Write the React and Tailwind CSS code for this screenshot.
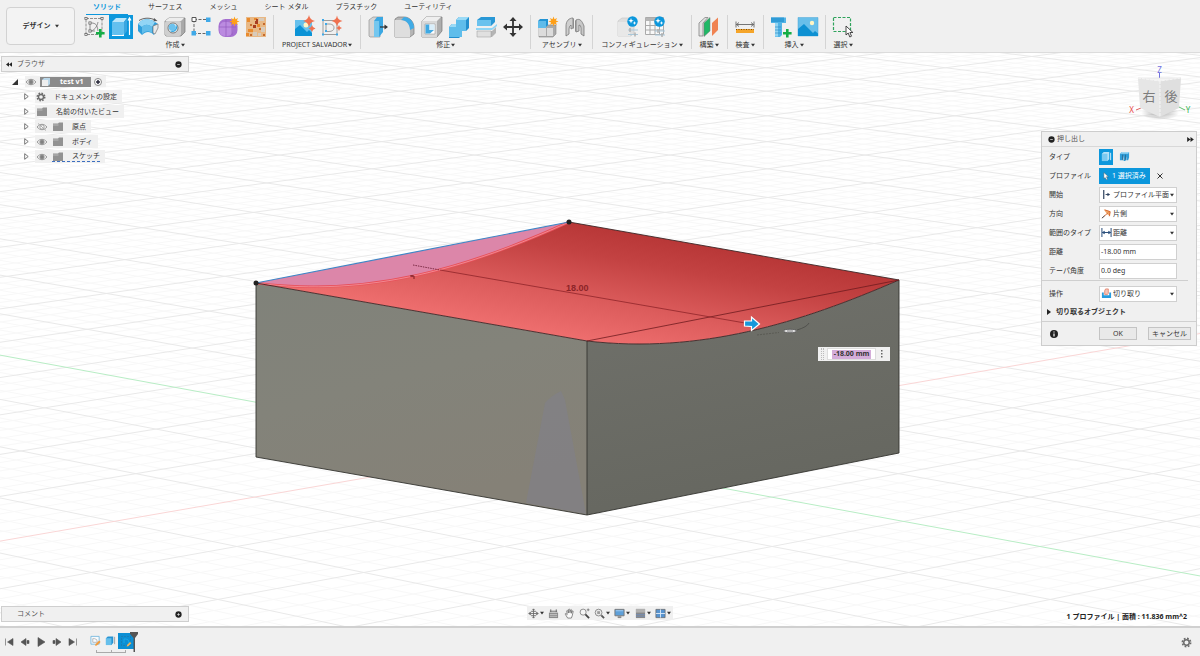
import React, { useState } from "react";
import clsx from "clsx";

const BLUE = "#0c97dc";

const Caret = ({ className }) => (
  <svg viewBox="0 0 5 4" className={clsx("w-1 h-1 shrink-0 fill-[#333]", className)}>
    <path d="M0 0.3h5L2.5 4z" />
  </svg>
);

/* ---------- ribbon icons, 24x24 each ---------- */

const Plus = () => <path d="M14 17h3v-3h2.6v3h3v2.6h-3v3H17v-3h-3z" fill="#16ad46" />;

const Sparkle = ({ x, y, r }) => (
  <path
    d={`M${x} ${y - r}Q${x + r * 0.15} ${y - r * 0.15} ${x + r} ${y}Q${x + r * 0.15} ${y + r * 0.15} ${x} ${y + r}Q${x - r * 0.15} ${y + r * 0.15} ${x - r} ${y}Q${x - r * 0.15} ${y - r * 0.15} ${x} ${y - r}z`}
    fill="#f0714f"
  />
);

const Star = ({ x, y }) => (
  <g transform={`translate(${x} ${y})`}>
    <path d="M0-5l1 2.8L3.6-3.6 2.3-1 5 0 2.3 1l1.3 2.6L1 2.3 0 5l-1-2.7-2.6 1.3L-2.3 1-5 0l2.7-1-1.3-2.6L-1-2.2z" fill="#ff9f16" />
  </g>
);

const Nodes = ({ points, color = "#555" }) =>
  points.map(([x, y]) => (
    <rect key={`${x}-${y}`} x={x - 1.1} y={y - 1.1} width="2.2" height="2.2" fill="#fff" stroke={color} strokeWidth="0.7" />
  ));

const ribbonIcons = {
  sketch: (
    <>
      <path d="M4 3.5h16v16H4z" fill="none" stroke="#777" strokeWidth="0.8" strokeDasharray="3 1" />
      <path d="M8 16c4 0 7-4 8-9M8 16V8h1.500c4 0 6 2 6.500 8M8 16h5" fill="none" stroke="#777" strokeWidth="0.8" />
      <Nodes points={[[4, 3.5], [20, 3.5], [4, 19.5], [8, 16], [8, 8]]} />
      <Plus />
    </>
  ),
  extrude: (
    <>
      <path d="M3 7l4-4h11l-3 4v14H5l-2-2z" fill="#bce6fa" />
      <path d="M3 7h12v11a2 2 0 0 1-2 2H5a2 2 0 0 1-2-2z" fill="#63c0ef" />
      <path d="M15 7l3-4v13l-3 4z" fill="#3aa6e0" />
      <path d="M3 20.500h12" stroke="#fff" />
      <path d="M20.500 20V3.500M19 5.500l1.500-2.500L22 5.500" fill="none" stroke="#fff" strokeWidth="1.200" />
    </>
  ),
  revolve: (
    <>
      <path d="M2 9l3-3c4-2.500 9-2.500 14 1l3 2-4 11c-4-4-8-4-12 0l-4-4z" fill="#2f9fdc" />
      <path d="M2 9l3-3c4-2.500 9-2.500 14 1l-3 5c-4-3-7-3-10 0z" fill="#92d5f5" />
      <path d="M6 12c3-3 6-3 10 0v6c-4-3-7-2-10 1z" fill="#62bdea" />
      <path d="M17 11l5-2v4l-3 6-2-1z" fill="#e9e9e9" stroke="#777" strokeWidth="0.700" />
      <path d="M3 5.500C8 2.500 14 2.500 19 5" fill="none" stroke="#555" strokeWidth="0.900" />
      <path d="M18 3l3.500 3-4 .3z" fill="#555" />
    </>
  ),
  hole: (
    <>
      <path d="M2 6l4-3h16v14l-4 4H3l-1-1z" fill="#a9a9a9" stroke="#777" strokeWidth="0.7" />
      <path d="M2 6l4-3h15l-3 3z" fill="#ededed" />
      <rect x="2" y="6" width="16" height="15" rx="2" fill="#cfcfcf" />
      <circle cx="10" cy="13" r="5" fill="#fff" stroke="#777" />
      <path d="M13.500 9.500a5 5 0 0 1-6.500 7c4 0 6.500-3 6.500-7z" fill="#2fa4e0" />
      <circle cx="9.300" cy="12.300" r="3.600" fill="#6cc2ee" />
    </>
  ),
  pattern: (
    <>
      <path d="M4 4.500h15M4 4.500v14h15" fill="none" stroke="#666" strokeWidth="1" strokeDasharray="3 1.500" />
      <path d="M2 2.500h4v4H2z" fill="#fff" stroke="#555" />
      <path d="M16 2.500h4.500V7H16zM16 16h4.500v4.500H16zM1.500 16H6v4.500H1.500z" fill="#3fa9e8" />
    </>
  ),
  form: (
    <>
      <rect x="1.500" y="4" width="19" height="18" rx="7" fill="#a56fd0" />
      <rect x="2.500" y="7" width="13" height="14" rx="5" fill="#bb8be0" />
      <path d="M2 12h17M9 5v16M15 6v14" stroke="#8d55bb" strokeWidth="0.6" fill="none" />
      <Star x={17.5} y={6.5} />
    </>
  ),
  texture: (
    <>
      <path d="M2 2h20v20H2z" fill="#e8b885" />
      <path d="M3 3h3v4H3zM10 3h3v2h-3zM4 14h5v3H4zM2 18h3v3H2zM13 9h3v3h-3z" fill="#e98b2e" />
      <path d="M15 3h5v3h-5zM17 12h4v5h-4zM9 17h4v4H9zM14 18h3v3h-3z" fill="#d8cbbb" />
      <path d="M11 6h3v3h-3zM9 10h3v3H9zM12 4h2v2h-2z" fill="#a83c20" />
      <path d="M6 9h2v2H6zM15 13h2v2h-2zM19 8h2v2h-2zM6 19h2v2H6zM19 19h2v2h-2z" fill="#c66a2c" />
    </>
  ),
  salvadorImage: (
    <>
      <path d="M3 5h17v16H3z" fill="#66c0ec" />
      <path d="M3 14l5-4 7 7 2-2 3 3v3H3z" fill="#0b93d6" />
      <circle cx="14" cy="10" r="2.500" fill="#fff5c4" />
      <Sparkle x={17} y={6} r={6} />
      <Sparkle x={20} y={13.500} r={3.500} />
    </>
  ),
  salvadorSketch: (
    <>
      <path d="M4 5.500h14v14H4z" fill="none" stroke="#888" strokeWidth="0.8" />
      <path d="M7 16.500V9h3c4 0 5 2 5 4s-2 3.500-5 3.500z" fill="none" stroke="#888" strokeWidth="0.8" />
      <path d="M3 4h2v2H3zM3 18.500h2v2H3zM17 18.500h2v2h-2zM6 8h2v2H6zM6 15h2v2H6z" fill="#3fa9e8" />
      <Sparkle x={18} y={6} r={5.500} />
      <Sparkle x={20} y={13} r={3} />
    </>
  ),
  pressPull: (
    <>
      <path d="M3 5l4-3h10l-3 3v17H4l-1-1z" fill="#d5d5d5" stroke="#888" strokeWidth="0.600" />
      <path d="M8 6l3-4h6v15l-4 5H8z" fill="#3ba8e3" />
      <path d="M8 6h5v16H8z" fill="#74c7ef" />
      <path d="M14 12h6" stroke="#333" strokeWidth="1.200" />
      <path d="M18.500 9.500L22 12l-3.500 2.500z" fill="#333" />
    </>
  ),
  fillet: (
    <>
      <path d="M2 4l3-2h6c6 0 10 5 10 11v6l-4 3H2z" fill="#b5b5b5" stroke="#777" strokeWidth="0.700" />
      <path d="M2 5h6c5 0 9 4 9 9v8H2z" fill="#dedede" />
      <path d="M8 5l3-3c6 0 10 5 10 11l-4 2c0-6-4-10-9-10z" fill="#3fabe6" />
    </>
  ),
  shell: (
    <>
      <path d="M2 6l4-4h16v14l-5 6H2z" fill="#adadad" stroke="#777" strokeWidth="0.700" />
      <path d="M2 6l4-4h15l-4 4z" fill="#efefef" />
      <path d="M2 6h15v16H2z" fill="#d9d9d9" />
      <path d="M5 9h10v10H5z" fill="#fff" stroke="#888" strokeWidth="0.500" />
      <path d="M5.500 9.500h4V15H14l-4 3.500H5.500z" fill="#3fa9e3" />
      <path d="M9.500 9.500h5V15h-5z" fill="#d9eefa" />
    </>
  ),
  combine: (
    <>
      <path d="M9 5l3-3h10v11l-3 3h-4v4l-3 3H2V12l3-3h4z" fill="#238fce" />
      <path d="M9 5h10v11h-4v6H2V12h7z" fill="#5fbdeb" />
      <path d="M9 5l3-3h10l-3 3zM2 12l3-3h4v3z" fill="#9adaf6" />
    </>
  ),
  split: (
    <>
      <path d="M3 5l4-3h14v5l-4 4H3z" fill="#2998d6" />
      <path d="M3 5h14v6H3z" fill="#6ac2ee" />
      <path d="M2 13h16l5-4v2l-5 4H2z" fill="#8fd5f5" />
      <path d="M3 16h15l4-4v6l-4 4H3z" fill="#b5b5b5" />
      <path d="M3 16h14v6H3z" fill="#e0e0e0" stroke="#999" strokeWidth="0.500" />
    </>
  ),
  move: (
    <path
      d="M12 2l3.500 4h-2.600v5.100H18V8.500l4 3.500-4 3.500v-2.600h-5.100V18h2.600L12 22l-3.500-4h2.600v-5.100H6v2.600L2 12l4-3.500v2.600h5.100V6H8.500z"
      fill="#333"
    />
  ),
  component: (
    <>
      <path d="M3 12l3-2h14v9l-3 3H3z" fill="#aaa" stroke="#888" strokeWidth="0.600" />
      <path d="M3 13h7v8H3zM11 13h6v8h-6z" fill="#dcdcdc" />
      <path d="M2 6l2-2h8v6l-2 2H2z" fill="#2294d4" />
      <path d="M2 6h8v7H2z" fill="#5fbbea" />
      <Star x={17.5} y={6.5} />
    </>
  ),
  joint: (
    <>
      <path d="M3 11c0-5 3-8 7-8v10l-2 1v-4q-2 1-2 4v5l-3 2z" fill="#cfcfcf" stroke="#777" strokeWidth="0.800" />
      <path d="M13 5c4-2 6 1 8 6v10l-3-2v-6q0-3-2-3v6l-3 1z" fill="#c8c8c8" stroke="#777" strokeWidth="0.800" />
      <path d="M10 3l1 1v9l-1 1zM13 5l-1 1v10l1 1z" fill="#8d8d8d" />
    </>
  ),
  configure: (
    <>
      <path d="M2 6l4-3h12v15l-3 3H2z" fill="#dedede" stroke="#c8c8c8" strokeWidth="0.700" />
      <path d="M2 7h12v14H2z" fill="#e8e8e8" />
      <path d="M12 15h10M12 19.500h10" stroke="#a8c8db" strokeWidth="1.200" />
      <path d="M14 13v4M19 17.500v4" stroke="#b0b0b0" strokeWidth="1.500" />
      <circle cx="16.500" cy="6.500" r="5.200" fill={BLUE} />
      <path d="M15 3l.7 2 2 .7-2 .7-.7 2-.7-2-2-.7 2-.7zM18.500 6l.5 1.500 1.500.5-1.500.5-.5 1.500-.5-1.500-1.500-.5 1.500-.5z" fill="#fff" />
    </>
  ),
  configTable: (
    <>
      <path d="M2.500 2.500h18v17h-18z" fill="#f8f8f8" stroke="#aaa" />
      <path d="M2.500 3h18v3h-18z" fill="#b5b5b5" />
      <path d="M2.500 10.500h18M2.500 15h18M7 6v13.500M12 6v13.500M16.500 6v13.500" stroke="#aaa" fill="none" />
      <path d="M12 16h10M12 20h10" stroke="#a8c8db" strokeWidth="1.200" />
      <path d="M15 14v4M19 18v4" stroke="#b0b0b0" strokeWidth="1.500" />
      <circle cx="16.500" cy="6.500" r="5.200" fill={BLUE} />
      <path d="M15 3l.7 2 2 .7-2 .7-.7 2-.7-2-2-.7 2-.7zM18.500 6l.5 1.500 1.500.5-1.500.5-.5 1.500-.5-1.500-1.500-.5 1.500-.5z" fill="#fff" />
    </>
  ),
  plane: (
    <>
      <path d="M2 8l6-5.500h3L6 8v13H2z" fill="#e2e2e2" stroke="#777" strokeWidth="0.700" />
      <path d="M7 8l6-5.500V16l-6 5.500z" fill="#1fb866" stroke="#777" strokeWidth="0.500" />
      <path d="M15 8l6-5.500V15l-6 6z" fill="#f08352" />
    </>
  ),
  measure: (
    <>
      <path d="M3 6.500v6M21 6.500v6M3 9.500h18M6 7.500l-2.500 2 2.500 2M18 7.500l2.500 2-2.500 2" fill="none" stroke="#666" strokeWidth="0.900" />
      <path d="M3 14h18v4H3z" fill="#f5a52a" />
      <path d="M3 14.500h18" stroke="#7a4d10" strokeDasharray="1 1.500" />
    </>
  ),
  insertPart: (
    <>
      <path d="M2 2.500h15V8h-4v12l-2 2H6V8H2z" fill="#52b4e6" />
      <path d="M2 2.500h13V7H2z" fill="#2f9bd6" />
      <path d="M6 8h3v13.500H6z" fill="#92d5f3" />
      <path d="M6 12h6M6 15h6M6 18h6" stroke="#2f8dc5" strokeWidth="0.700" />
      <Plus />
    </>
  ),
  insertImage: (
    <>
      <path d="M2 2.500h20v18.500H2z" fill="#68bfea" stroke="#4aa6d6" strokeWidth="0.500" />
      <path d="M2 14l6-5 9 9 2-2 3 2.500v2.500H2z" fill="#0d90d2" />
      <circle cx="16" cy="8" r="2.200" fill="#fff5c4" />
    </>
  ),
  select: (
    <>
      <path d="M2.500 2.500h17v14h-17z" fill="none" stroke="#2fa35c" strokeWidth="1.200" strokeDasharray="3 1.500" />
      <path d="M15 11v9l2.200-2 1.600 4 1.700-.8-1.600-3.700h3z" fill="#fff" stroke="#333" strokeWidth="0.900" />
    </>
  ),
};

const tabs = ["ソリッド", "サーフェス", "メッシュ", "シート メタル", "プラスチック", "ユーティリティ"];

const groups = [
  { label: "作成", tools: ["sketch", "extrude", "revolve", "hole", "pattern", "form", "texture"] },
  { label: "PROJECT SALVADOR", tools: ["salvadorImage", "salvadorSketch"] },
  { label: "修正", tools: ["pressPull", "fillet", "shell", "combine", "split", "move"] },
  { label: "アセンブリ", tools: ["component", "joint"] },
  { label: "コンフィギュレーション", tools: ["configure", "configTable"] },
  { label: "構築", tools: ["plane"] },
  { label: "検査", tools: ["measure"] },
  { label: "挿入", tools: ["insertPart", "insertImage"] },
  { label: "選択", tools: ["select"] },
];

const Toolbar = () => {
  const [tab, setTab] = useState("ソリッド");

  return (
    <header className="relative z-10 flex h-[53px] bg-[#f0f0f0] border-b border-[#dcdcdc]">
      <button className="ml-[6px] mt-[7px] w-[69px] h-[38px] shrink-0 flex items-center justify-center gap-1 rounded-sm border border-[#d2d2d2] bg-[#f3f3f3] font-bold">
        デザイン
        <Caret />
      </button>
      <div className="ml-[2px]">
        <nav className="flex gap-[13px] pl-[9px]">
          {tabs.map((name) => (
            <button
              key={name}
              onClick={() => setTab(name)}
              className={clsx(
                "h-[15px] px-[7px] border-b leading-[14px] whitespace-nowrap",
                tab === name ? "border-[#0c97dc] text-[#0c97dc] font-bold" : "border-transparent"
              )}
            >
              {name}
            </button>
          ))}
        </nav>
        <div className="flex">
          {groups.map((group) => (
            <div key={group.label} className="flex flex-col items-center border-r border-[#d4d4d4] last:border-0 h-[34px]">
              <div className="flex gap-[3px] px-[5px]">
                {group.tools.map((tool) => (
                  <button key={tool} aria-label={tool} className={clsx("size-6", tool === "extrude" && "bg-[#0c97dc]")}>
                    <svg viewBox="0 0 24 24" className="size-6">
                      {ribbonIcons[tool]}
                    </svg>
                  </button>
                ))}
              </div>
              <button className="flex items-center gap-px px-2 leading-3 whitespace-nowrap">
                {group.label}
                <Caret />
              </button>
            </div>
          ))}
        </div>
      </div>
    </header>
  );
};

/* ---------- browser tree ---------- */

const Eye = ({ off }) => (
  <svg viewBox="0 0 12 8" className="w-3 h-2 shrink-0">
    <path d="M1 4Q6-1.500 11 4Q6 9.500 1 4z" fill="#fff" stroke="#999" />
    <circle cx="6" cy="4" r="2.200" fill={off ? "#fff" : "#808080"} stroke="#999" />
    {off && <path d="M2 .5l8 7" stroke="#aaa" />}
  </svg>
);

const Folder = () => (
  <svg viewBox="0 0 12 9" className="w-3 h-[9px] shrink-0">
    <path d="M1 1.500h5L7 .5h4V9H1z" fill="#929292" />
    <path d="M1 3h5.500" stroke="#c5c5c5" strokeWidth="0.800" />
  </svg>
);

const Gear = ({ className }) => (
  <svg viewBox="0 0 12 12" className={clsx("shrink-0", className)}>
    <circle cx="6" cy="6" r="4.500" fill="none" stroke="#6b6b6b" strokeWidth="1.800" strokeDasharray="1.900 1.634" />
    <circle cx="6" cy="6" r="3" fill="none" stroke="#6b6b6b" strokeWidth="1.600" />
  </svg>
);

const Dot = ({ plus }) => (
  <svg viewBox="0 0 8 8" className="size-[7px]">
    <circle cx="4" cy="4" r="3.600" fill="#222" />
    <path d={plus ? "M2.500 4h3M4 2.500v3" : "M2.500 4h3"} stroke="#ddd" strokeWidth="0.900" />
  </svg>
);

const treeItems = [
  { name: "ドキュメントの設定", gear: true },
  { name: "名前の付いたビュー" },
  { name: "原点", eye: "off" },
  { name: "ボディ", eye: "on" },
  { name: "スケッチ", eye: "on", marked: true },
];

const Browser = () => (
  <section className="w-[188px] ml-px">
    <div className="flex items-center h-4 px-[6px] pl-1 border border-[#cfcfcf] bg-[#f0f0f0]">
      <svg viewBox="0 0 8 6" className="w-[6px] h-[5px] fill-[#222]">
        <path d="M4 0v6L0 3zM8 0v6L4 3z" />
      </svg>
      <h2 className="ml-[5px] text-[#555]">ブラウザ</h2>
      <button aria-label="最小化" className="ml-auto">
        <Dot />
      </button>
    </div>
    <ul className="mt-[2px]">
      <li className="flex items-center h-[15px] pl-[11px]">
        <svg viewBox="0 0 6 6" className="size-[6px] mr-[7px] fill-[#333]">
          <path d="M6 0v6H0z" />
        </svg>
        <div className="flex items-center h-[11px] bg-[#f0f0f0] pr-1">
          <Eye />
          <span className="flex items-center h-[10px] w-[51px] ml-[3px] px-[2px] bg-[#8b8b8b] text-white font-bold">
            <svg viewBox="0 0 8 8" className="size-2 mr-[10px]">
              <path d="M0 2l2-2h6v6L6 8H0z" fill="#b9d6e8" />
              <path d="M0 2h6v6H0z" fill="#eee" />
            </svg>
            test v1
          </span>
          <input type="radio" defaultChecked aria-label="アクティブ" className="appearance-none size-2 ml-[3px] rounded-full border border-[#888] bg-[radial-gradient(#334_35%,#fff_45%)]" />
        </div>
      </li>
      {treeItems.map((item) => (
        <li key={item.name} className="flex items-center h-[15px] pl-[23px]">
          <svg viewBox="0 0 5 7" className="w-[5px] h-[7px] mr-[6px]">
            <path d="M.7.700L4.200 3.500.7 6.300z" fill="#fff" stroke="#555" strokeWidth="0.800" />
          </svg>
          <div className="flex items-center h-[13px] px-px bg-[#f0f0f0] pr-[5px]">
            {item.eye && <Eye off={item.eye === "off"} />}
            <span className={clsx("flex items-center gap-2", item.eye && "ml-1", item.marked && "border-b border-dashed border-[#3d6fc0]")}>
              {item.gear ? <Gear className="size-[10px]" /> : <Folder />}
              {item.name}
            </span>
          </div>
        </li>
      ))}
    </ul>
  </section>
);

/* ---------- extrude dialog ---------- */

const fieldIcons = {
  start: (
    <>
      <path d="M3 1v10" stroke="#2b3f5c" strokeWidth="1.300" />
      <path d="M5 6h3" stroke="#2b3f5c" />
      <path d="M7 4l3 2-3 2z" fill="#2b3f5c" />
    </>
  ),
  direction: (
    <>
      <path d="M3 1.500l7 2v5L7 7z" fill="#f3a868" />
      <path d="M1 11l7-6M4 2l6 2-1 5" stroke="#d2622c" strokeWidth="1" fill="none" />
      <path d="M1 11l3-2.500" stroke="#456" />
    </>
  ),
  distance: <path d="M1 1v10M11 1v10M2 6h8M4 4.500L2 6l2 1.500M8 4.500L10 6 8 7.500" stroke="#2b4f7c" strokeWidth="1.100" fill="none" />,
  cut: (
    <>
      <path d="M1 5h2v3h6V5h2v6H1z" fill="#2a9bdc" />
      <path d="M4 3l1-2h3v5l-1 1H4z" fill="#f7c4b8" stroke="#d9694e" strokeWidth="0.700" />
    </>
  ),
};

const Row = ({ label, id, children }) => (
  <div className="flex items-center h-[19px]">
    <label htmlFor={id} className="w-[50px] shrink-0 whitespace-nowrap">
      {label}
    </label>
    {children}
  </div>
);

const SelectRow = ({ label, id, icon, value }) => (
  <Row label={label} id={id}>
    <div className="relative flex items-center w-[78px] h-4 pl-px border border-[#d0d0d0] bg-white">
      <svg viewBox="0 0 12 12" className="size-[11px] shrink-0">
        {fieldIcons[icon]}
      </svg>
      <select id={id} className="appearance-none flex-1 min-w-0 h-full pl-px outline-none">
        <option>{value}</option>
      </select>
      <Caret className="absolute right-[2px] pointer-events-none" />
    </div>
  </Row>
);

const InputRow = ({ label, id, value }) => (
  <Row label={label} id={id}>
    <input id={id} defaultValue={value} className="w-[78px] h-4 px-px border border-[#d0d0d0] bg-white outline-none" />
  </Row>
);

const ExtrudeDialog = () => (
  <form className="w-[156px] border border-[#cdcdcd] bg-[#f0f0f0]" onSubmit={(e) => e.preventDefault()}>
    <div className="flex items-center h-[15px] px-[6px] border-b border-[#d8d8d8]">
      <Dot />
      <h2 className="ml-[2px] text-[#555]">押し出し</h2>
      <svg viewBox="0 0 8 6" className="w-[7px] h-[5px] ml-auto -mr-1 fill-[#222]">
        <path d="M0 0v6l4-3zM4 0v6l4-3z" />
      </svg>
    </div>
    <div className="pl-[7px]">
      <Row label="タイプ">
        <button type="button" aria-label="押し出し" className="w-[14px] h-4 bg-[#0c97dc] flex items-center justify-center">
          <svg viewBox="0 0 12 12" className="size-[11px]">
            <path d="M1 3l2-2h6v8l-2 2H1z" fill="#b6e2f8" />
            <path d="M1 3h6v8H1z" fill="#7bcaf1" />
            <path d="M10.500 2v8" stroke="#d7effb" />
          </svg>
        </button>
        <button type="button" aria-label="薄い押し出し" className="ml-1 w-[14px] h-4 flex items-center justify-center">
          <svg viewBox="0 0 12 12" className="size-[11px]">
            <path d="M1 3l2-2h8v6l-1 3H8V6L7 11H5V5L4 10H1z" fill="#2f9dd8" />
            <path d="M1 3l2-2h8l-1 2z" fill="#9ad6f3" />
            <path d="M4 4v6M7 4v6" stroke="#28506e" strokeWidth="0.700" />
          </svg>
        </button>
      </Row>
      <Row label="プロファイル">
        <button type="button" className="flex items-center h-4 w-[51px] pl-1 gap-[3px] bg-[#0c97dc] text-white whitespace-nowrap">
          <svg viewBox="0 0 7 9" className="w-[6px] h-2">
            <path d="M1 .5v7l1.500-1.200L4 8.800l1.200-.6L4 5.300h2.300z" fill="#fff" stroke="#555" strokeWidth="0.500" />
          </svg>
          1 選択済み
        </button>
        <button type="button" aria-label="クリア" className="ml-[7px]">
          <svg viewBox="0 0 6 6" className="size-[6px]">
            <path d="M.5.500l5 5M5.500.500l-5 5" stroke="#333" />
          </svg>
        </button>
      </Row>
      <SelectRow label="開始" id="start" icon="start" value="プロファイル平面" />
      <SelectRow label="方向" id="direction" icon="direction" value="片側" />
      <SelectRow label="範囲のタイプ" id="extent" icon="distance" value="距離" />
      <InputRow label="距離" id="distance" value="-18.00 mm" />
      <InputRow label="テーパ角度" id="taper" value="0.0 deg" />
    </div>
    <hr className="mb-[3px] mr-2 border-[#cfcfcf]" />
    <div className="pl-[7px]">
      <SelectRow label="操作" id="operation" icon="cut" value="切り取り" />
    </div>
    <button type="button" className="flex items-center h-[18px] pl-[5px] gap-[5px] font-bold">
      <svg viewBox="0 0 4 6" className="w-1 h-[6px] fill-[#222]">
        <path d="M0 0l4 3-4 3z" />
      </svg>
      切り取るオブジェクト
    </button>
    <div className="flex items-center h-6 border-t border-[#d0d0d0] pl-2 pr-[5px]">
      <svg viewBox="0 0 8 8" className="size-2">
        <circle cx="4" cy="4" r="4" fill="#222" />
        <path d="M4 3.500v3M4 1.500v1" stroke="#fff" strokeWidth="1.200" />
      </svg>
      <button type="submit" className="ml-auto w-[38px] h-[13px] border border-[#c4c4c4] bg-[#e9e9e9]">
        OK
      </button>
      <button type="button" className="ml-[11px] w-[43px] h-[13px] border border-[#c4c4c4] bg-[#e9e9e9] whitespace-nowrap">
        キャンセル
      </button>
    </div>
  </form>
);

const ViewCube = () => (
  <svg viewBox="1122 64 72 64" className="w-[72px] h-16 mr-[3px]">
    <defs>
      <radialGradient id="cubeShadow">
        <stop offset="0" stopColor="#999" stopOpacity="0.8" />
        <stop offset="1" stopColor="#999" stopOpacity="0" />
      </radialGradient>
    </defs>
    <ellipse cx="1160" cy="113" rx="19" ry="7" fill="url(#cubeShadow)" />
    <path d="M1159.500 73v6" stroke="#7070dd" />
    <path d="M1136 110l5-2" stroke="#e06060" />
    <path d="M1185 110l-6-3" stroke="#60c070" />
    <path d="M1138 78h43l-21 4z" fill="#f4f4f4" stroke="#ddd" strokeWidth="0.600" />
    <path d="M1138 78l22 3v36l-20-9z" fill="#e6e6e6" />
    <path d="M1181 78l-21 3v36l19-9z" fill="#dfdfdf" />
    <path d="M1138 78l22 3 21-3M1160 81v36" fill="none" stroke="#f6f6f6" strokeDasharray="3 1" />
    <g fontFamily="Noto Sans CJK JP, sans-serif" fontSize="13" fill="#7c7c7c" textAnchor="middle">
      <text x="1149" y="101">右</text>
      <text x="1171" y="101">後</text>
    </g>
    <g fontFamily="Noto Sans, sans-serif" fontSize="8" textAnchor="middle">
      <text x="1159.500" y="73" fill="#6f6fe0">Z</text>
      <text x="1131.500" y="113" fill="#e84a4a">X</text>
      <text x="1188" y="113" fill="#35b455">Y</text>
    </g>
  </svg>
);

/* ---------- model view ---------- */

// ground plane: two families of lines, each running to its own far vanishing point
const ORIGIN = { x: 521, y: 451 };
const HORIZON = -900;
const vanishing = [8330, -6821];

const gridLines = vanishing.flatMap((vx, family) =>
  Array.from({ length: 161 }, (_, i) => {
    const n = i - 80;
    const x = ORIGIN.x + n * 50;
    // extend past the near side of the window
    const k = 1.6;
    return {
      key: `${family}-${n}`,
      x1: vx,
      y1: HORIZON,
      x2: vx + (x - vx) * k,
      y2: HORIZON + (ORIGIN.y - HORIZON) * k,
      stroke: n === 0 ? (family === 0 ? "#fad6d6" : "#b8edc5") : n % 5 === 0 ? "#e9e9e9" : "#f8f8f8",
      axis: n === 0,
      major: n % 5 === 0,
    };
  })
).sort((a, b) => a.axis - b.axis || a.major - b.major);

const Scene = () => (
  <svg viewBox="0 53 1200 573" preserveAspectRatio="xMidYMid slice" className="absolute inset-0 w-full h-full">
    <defs>
      <linearGradient id="cutFace" gradientUnits="userSpaceOnUse" x1="587" y1="341" x2="607" y2="228">
        <stop offset="0" stopColor="#ee6e6e" />
        <stop offset="0.35" stopColor="#dc5c5c" />
        <stop offset="0.75" stopColor="#c34242" />
        <stop offset="1" stopColor="#b83737" />
      </linearGradient>
      <linearGradient id="leftFace" x1="0" y1="0" x2="0.4" y2="1">
        <stop offset="0" stopColor="#80827a" />
        <stop offset="0.5" stopColor="#83837a" />
        <stop offset="1" stopColor="#858177" />
      </linearGradient>
      <linearGradient id="rightFace" x1="0" y1="0" x2="0.3" y2="1">
        <stop offset="0" stopColor="#70716b" />
        <stop offset="1" stopColor="#666760" />
      </linearGradient>
    </defs>
    {gridLines.map(({ key, axis, major, ...line }) => (
      <line key={key} {...line} />
    ))}

    {/* body */}
    <path d="M256 283L587 341V515L256 457z" fill="url(#leftFace)" />
    <path d="M526 503L545 403Q551 396 561 391L565 400L586 514z" fill="#80808a" opacity="0.6" />
    <path d="M587 341C700 354 800 323 899 280V453L587 515z" fill="url(#rightFace)" />
    <path d="M256 283C370 298 470 267 569 222L899 280C800 323 700 354 587 341z" fill="url(#cutFace)" />
    <path d="M256 283C370 298 470 267 569 222z" fill="#dc86a9" />
    <path d="M256 283C370 298 470 267 569 222" fill="none" stroke="#e8505a" strokeWidth="2.500" />
    <path d="M256 283C370 298 470 267 569 222" fill="none" stroke="#f5a0a8" strokeWidth="0.700" />
    <path d="M256 283L569 222" stroke="#3f86c6" strokeWidth="1.200" />
    <path d="M256 283L587 341C700 354 800 323 899 280L569 222" fill="none" stroke="#3c2626" strokeWidth="0.900" />
    <path d="M256 283V457L587 515L899 453V280M587 341V515" fill="none" stroke="#33332f" strokeWidth="0.900" />
    <path d="M587 341L899 280" stroke="#6e1c1f" strokeWidth="0.800" />
    <circle cx="256" cy="283" r="2.500" fill="#222" />
    <circle cx="569" cy="222" r="2.500" fill="#222" />

    {/* distance manipulator */}
    <path d="M413 265L440 270" stroke="#7d2b45" strokeDasharray="1.500 1" />
    <path d="M440 270L745 323" stroke="#8f2529" strokeWidth="0.800" />
    <path d="M410 276h4v3M412 275v2" fill="none" stroke="#7a1c22" />
    <text x="566" y="291" fontFamily="Liberation Sans, sans-serif" fontSize="9" fontWeight="bold" fill="#8c2428">
      18.00
    </text>
    <path d="M744.500 321h7v-4l8 7-8 6.500v-4l-7-.5z" fill="#1797da" stroke="#fff" strokeWidth="1.200" />
    <path d="M757 335l22-2.500" fill="none" stroke="#55554f" strokeWidth="0.800" strokeDasharray="2 1" />
    <path d="M797 330Q807 327 809 323" fill="none" stroke="#4a4a46" strokeWidth="0.800" />
    <ellipse cx="790" cy="331" rx="6.500" ry="1.700" fill="#eee" stroke="#444" strokeWidth="0.700" />
    <path d="M787 331h6" stroke="#777" />
  </svg>
);

const FloatingValue = () => (
  <div className="absolute left-[818px] top-[294px] flex items-center w-[72px] h-[14px] bg-[#f0f0f0]">
    <span className="w-[3px] h-3 ml-[3px] border-x border-dotted border-[#bbb]" />
    <div className="flex items-center justify-center w-[49px] h-3 ml-[3px] bg-white border border-[#ddd]">
      <input aria-label="距離" defaultValue="-18.00 mm" className="w-[39px] h-[9px] bg-[#d4add9] font-bold text-center outline-none" />
    </div>
    <svg viewBox="0 0 2 8" className="w-[2px] h-2 ml-[5px]">
      <path d="M0 0h1.500v1.500H0zM0 3h1.500v1.500H0zM0 6h1.500v1.500H0z" fill="#666" />
    </svg>
  </div>
);

const navTools = [
  { name: "オービット", menu: true, icon: <path d="M6 1v10M1 6h10M4.500 2.500L6 1l1.500 1.500M4.500 9.500L6 11l1.500-1.500M2.500 4.500L1 6l1.500 1.500M9.500 4.500L11 6 9.500 7.500M6 3.500a4 2.500 0 1 0 .1 0" fill="none" stroke="#666" strokeWidth="0.900" /> },
  { name: "ビューにフィット", icon: <><path d="M1 5h10v6H1z" fill="#8b8b8b" /><path d="M2 7h8M2 9h8" stroke="#eee" strokeWidth="0.600" /><path d="M2 3.500h8M3 1.500v3M9 1.500v3" stroke="#666" /></> },
  { name: "画面移動", icon: <path d="M4 11L1.500 7q-.5-1.300.8-.8L3.500 7.300 3 3q.5-1 1.200 0l.6 2.500L5 1.500q.6-.9 1.200 0l.3 3.700L7.300 2q.7-.8 1.100.2L8 5.800l1-2.500q.9-.6 1 .4L9 8.500 8 11z" fill="#fafafa" stroke="#666" strokeWidth="0.800" /> },
  { name: "ズーム", icon: <><circle cx="4.500" cy="4.500" r="3.300" fill="#f5f5f5" stroke="#888" /><path d="M7 7l4 4" stroke="#444" strokeWidth="2" /><path d="M10 .5v3M8.500 2h3" stroke="#666" strokeWidth="0.800" /></> },
  { name: "ウィンドウ ズーム", menu: true, icon: <><circle cx="5" cy="5" r="3.700" fill="#e8e8e8" stroke="#888" /><path d="M3.500 3.500h3v3h-3z" fill="#999" /><path d="M8 8l3 3" stroke="#555" strokeWidth="2" /></> },
  { name: "表示設定", menu: true, icon: <><path d="M1 1.500h10v7H1z" fill="#5d9fd8" stroke="#777" /><path d="M4 9h4v2H4z" fill="#888" /><path d="M2 3h8" stroke="#a5cdf0" /></> },
  { name: "グリッド", menu: true, icon: <><path d="M1 1h10v10H1z" fill="#888" /><path d="M1 1h10v4H1z" fill="#b0b0b0" /><path d="M1 7h10M1 9h10" stroke="#6f8fc0" strokeWidth="0.800" /></> },
  { name: "ビューポート", menu: true, icon: <><path d="M1 1.500h10v9H1z" fill="#5793cf" stroke="#666" strokeWidth="0.800" /><path d="M6 1.500v9M1 6h10" stroke="#dbe9f7" /></> },
];

const NavBar = () => (
  <div className="flex items-center justify-between w-[146px] h-[14px] pl-px pr-[2px] bg-[#f0f0f0]">
    {navTools.map((tool) => (
      <button key={tool.name} aria-label={tool.name} className="flex items-center gap-px">
        <svg viewBox="0 0 12 12" className="size-[11px]">
          {tool.icon}
        </svg>
        {tool.menu && <Caret />}
      </button>
    ))}
  </div>
);

/* ---------- timeline ---------- */

const playback = [
  { name: "先頭へ", d: "M1.500 1.500v7M9 1.500v7L3.500 5z" },
  { name: "前へ", d: "M6 1.500v7L1 5zM7 3.500h2v3H7z" },
  { name: "再生", d: "M2 .5v9L9 5z" },
  { name: "次へ", d: "M4 1.500v7L9 5zM1 3.500h2v3H1z" },
  { name: "最後へ", d: "M8.500 1.500v7M1 1.500v7L6.500 5z" },
];

const Timeline = () => (
  <footer className="relative z-10 flex items-center h-[30px] pl-1 pr-2 bg-[#f0f0f0] border-t-2 border-[#d0d0d0]">
    <div className="flex gap-[6px]">
      {playback.map((item) => (
        <button key={item.name} aria-label={item.name}>
          <svg viewBox="0 0 10 10" className="size-[10px]">
            <path d={item.d} fill="#555" stroke="#555" strokeWidth="0.600" />
          </svg>
        </button>
      ))}
    </div>
    <div className="relative ml-[10px]">
      <div className="flex items-center h-[18px]">
        <button aria-label="スケッチ1" className="w-[15px] flex justify-center">
          <svg viewBox="0 0 12 12" className="size-[11px]">
            <path d="M1 1.500h9v8.500H1z" fill="#f8fbfd" stroke="#6cb3dc" strokeWidth="0.900" />
            <path d="M3 8V4h2q3 0 3 4z" fill="none" stroke="#9a9a9a" strokeWidth="0.700" />
            <path d="M6 10l4-4 1.500 1.500-4 4-2 .3z" fill="#f39a38" />
          </svg>
        </button>
        <button aria-label="押し出し1" className="w-[15px] flex justify-center">
          <svg viewBox="0 0 12 12" className="size-[11px]">
            <path d="M1 3.500l2-2h6v7l-2 2.500H1z" fill="#2793d2" />
            <path d="M1 3.500h6V11H1z" fill="#66bfeb" />
            <path d="M10.500 2v8" stroke="#888" strokeWidth="0.800" />
          </svg>
        </button>
        <button aria-label="スケッチ2" className="w-4 h-4 bg-[#0c8fd4] flex items-center justify-center">
          <svg viewBox="0 0 12 12" className="size-3">
            <path d="M1.500 1.500h9v9h-9z" fill="none" stroke="#38647e" strokeWidth="0.700" strokeDasharray="1 2" />
            <path d="M4 8V4h2q3 0 3 4" fill="none" stroke="#1fb0f0" strokeWidth="0.700" />
            <path d="M7 10l3-3 1.300 1.300-3 3-1.600.2z" fill="#f3b35a" />
          </svg>
        </button>
      </div>
      <div className="flex ml-2 w-[30px] h-[3px] border-x border-b border-[#aaa]">
        <span className="mx-auto w-px bg-[#aaa]" />
      </div>
      <svg viewBox="0 0 8 20" className="absolute top-0 -right-1 w-2 h-5 fill-[#555]">
        <path d="M0 0h8v2L5 6v14H3.500V6L0 2z" />
      </svg>
    </div>
    <button aria-label="設定" className="ml-auto">
      <Gear className="size-[11px]" />
    </button>
  </footer>
);

const App = () => {
  return (
    <div className="min-h-screen flex flex-col bg-white text-[#333] text-[7px] leading-[10px] font-normal font-['Noto_Sans','Noto_Sans_CJK_JP',sans-serif] overflow-hidden">
      <Toolbar />
      <main className="relative flex-1 flex flex-col justify-between">
        <Scene />
        <FloatingValue />
        <div className="relative flex justify-between items-start pt-[3px] pr-[3px]">
          <Browser />
          <div className="flex flex-col items-end gap-[3px] pt-2">
            <ViewCube />
            <ExtrudeDialog />
          </div>
        </div>
        <div className="relative grid grid-cols-3 items-end pb-1">
          <div className="flex items-center w-[188px] h-4 ml-px pl-[15px] pr-[6px] border border-[#cfcfcf] bg-[#f0f0f0]">
            <h2 className="text-[#555]">コメント</h2>
            <button aria-label="コメントを追加" className="ml-auto">
              <Dot plus />
            </button>
          </div>
          <div className="flex justify-center pb-[2px]">
            <NavBar />
          </div>
          <p className="pr-[13px] text-right font-bold text-[#222]">1 プロファイル | 面積 : 11.836 mm^2</p>
        </div>
      </main>
      <Timeline />
    </div>
  );
};

export default App;
